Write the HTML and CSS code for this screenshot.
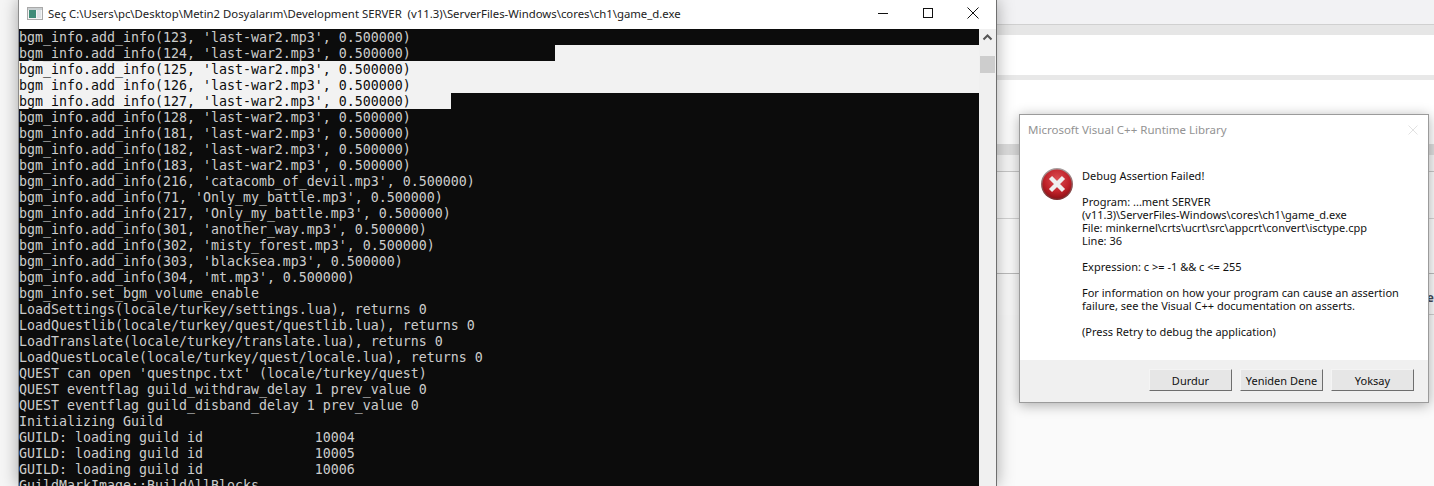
FILE: index.html
```html
<!DOCTYPE html>
<html lang="tr">
<head>
<meta charset="utf-8">
<title>game_d.exe</title>
<link rel="stylesheet" href="styles.css">
</head>
<body>
<div class="desktop">
  <div class="gutter"></div>
  <section class="console">
    <header class="titlebar">
      <svg class="app-icon" width="16" height="13" viewBox="0 0 16 13"><rect x="0.5" y="0.5" width="15" height="12" fill="#f4f4f4" stroke="#a9a9a9"/><rect x="1" y="1" width="14" height="2" fill="#c9ced0"/><rect x="2" y="3" width="7" height="8" fill="#3f8c78"/><rect x="10" y="3" width="4" height="8" fill="#dfe3e6"/></svg>
      <span class="title">Seç C:\Users\pc\Desktop\Metin2 Dosyalarım\Development SERVER  (v11.3)\ServerFiles-Windows\cores\ch1\game_d.exe</span>
      <div class="controls">
        <svg width="12" height="12" viewBox="0 0 12 12"><path d="M1 6.5H11" stroke="#111" fill="none"/></svg>
        <svg width="12" height="12" viewBox="0 0 12 12"><rect x="1.5" y="1.5" width="9" height="9" stroke="#111" fill="none"/></svg>
        <svg width="12" height="12" viewBox="0 0 12 12"><path d="M0.5 0.5L11.5 11.5M11.5 0.5L0.5 11.5" stroke="#111" fill="none"/></svg>
      </div>
    </header>
    <div class="console-body">
      <div class="screen">
        <div class="line">bgm_info.add_info(123, 'last-war2.mp3', 0.500000)</div>
        <div class="line split"><span class="seg seg-top">bgm_info.add_info(124, 'last-war2.mp3', 0.500000)</span><span class="tail tail-light"></span></div>
        <div class="line selected">bgm_info.add_info(125, 'last-war2.mp3', 0.500000)</div>
        <div class="line selected">bgm_info.add_info(126, 'last-war2.mp3', 0.500000)</div>
        <div class="line split"><span class="seg seg-bottom">bgm_info.add_info(127, 'last-war2.mp3', 0.500000)</span><span class="tail"></span></div>
        <div class="line">bgm_info.add_info(128, 'last-war2.mp3', 0.500000)</div>
        <div class="line">bgm_info.add_info(181, 'last-war2.mp3', 0.500000)</div>
        <div class="line">bgm_info.add_info(182, 'last-war2.mp3', 0.500000)</div>
        <div class="line">bgm_info.add_info(183, 'last-war2.mp3', 0.500000)</div>
        <div class="line">bgm_info.add_info(216, 'catacomb_of_devil.mp3', 0.500000)</div>
        <div class="line">bgm_info.add_info(71, 'Only_my_battle.mp3', 0.500000)</div>
        <div class="line">bgm_info.add_info(217, 'Only_my_battle.mp3', 0.500000)</div>
        <div class="line">bgm_info.add_info(301, 'another_way.mp3', 0.500000)</div>
        <div class="line">bgm_info.add_info(302, 'misty_forest.mp3', 0.500000)</div>
        <div class="line">bgm_info.add_info(303, 'blacksea.mp3', 0.500000)</div>
        <div class="line">bgm_info.add_info(304, 'mt.mp3', 0.500000)</div>
        <div class="line">bgm_info.set_bgm_volume_enable</div>
        <div class="line">LoadSettings(locale/turkey/settings.lua), returns 0</div>
        <div class="line">LoadQuestlib(locale/turkey/quest/questlib.lua), returns 0</div>
        <div class="line">LoadTranslate(locale/turkey/translate.lua), returns 0</div>
        <div class="line">LoadQuestLocale(locale/turkey/quest/locale.lua), returns 0</div>
        <div class="line">QUEST can open 'questnpc.txt' (locale/turkey/quest)</div>
        <div class="line">QUEST eventflag guild_withdraw_delay 1 prev_value 0</div>
        <div class="line">QUEST eventflag guild_disband_delay 1 prev_value 0</div>
        <div class="line">Initializing Guild</div>
        <div class="line">GUILD: loading guild id              10004</div>
        <div class="line">GUILD: loading guild id              10005</div>
        <div class="line">GUILD: loading guild id              10006</div>
        <div class="line">GuildMarkImage::BuildAllBlocks</div>
      </div>
      <div class="scrollbar">
        <svg class="arrow" width="15" height="17" viewBox="0 0 15 17"><path d="M3.5 10.5L7.5 6.5L11.5 10.5" stroke="#555" stroke-width="2" fill="none"/></svg>
        <div class="thumb"></div>
      </div>
    </div>
  </section>
  <main class="backdrop">
    <div class="band band-head"></div>
    <div class="band band-stripe-a"></div>
    <div class="band band-white-a"></div>
    <div class="band band-stripe-b"></div>
    <div class="band band-white-b"></div>
    <div class="band band-stripe-c"></div>
    <div class="band band-row-a"></div>
    <div class="band band-row-b"></div>
    <div class="band band-row-c"></div>
    <div class="band band-row-d"><span class="cell">ıe</span></div>
    <div class="dialog">
      <div class="dialog-title">
        <span>Microsoft Visual C++ Runtime Library</span>
        <svg width="10" height="10" viewBox="0 0 10 10"><path d="M0.5 0.5L9.5 9.5M9.5 0.5L0.5 9.5" stroke="#e2e2e2" fill="none"/></svg>
      </div>
      <div class="dialog-body">
        <svg class="error-icon" width="32" height="32" viewBox="0 0 32 32">
          <defs>
            <radialGradient id="red" cx="50%" cy="35%" r="70%"><stop offset="0" stop-color="#dc4f54"/><stop offset="0.6" stop-color="#c0222a"/><stop offset="1" stop-color="#860d12"/></radialGradient>
            <linearGradient id="ring" x1="0" y1="0" x2="0" y2="1"><stop offset="0" stop-color="#a8a0a0"/><stop offset="1" stop-color="#7a2a2c"/></linearGradient>
          </defs>
          <circle cx="16" cy="16" r="16" fill="url(#ring)"/>
          <circle cx="16" cy="16" r="14.6" fill="url(#red)"/>
          <path d="M9.5 9.5L22.5 22.5M22.5 9.5L9.5 22.5" stroke="#efefef" stroke-width="4.4" fill="none"/>
        </svg>
        <div class="message">
          <p>Debug Assertion Failed!</p>
          <p>Program: ...ment SERVER<br>(v11.3)\ServerFiles-Windows\cores\ch1\game_d.exe<br>File: minkernel\crts\ucrt\src\appcrt\convert\isctype.cpp<br>Line: 36</p>
          <p>Expression: c &gt;= -1 &amp;&amp; c &lt;= 255</p>
          <p>For information on how your program can cause an assertion<br>failure, see the Visual C++ documentation on asserts.</p>
          <p>(Press Retry to debug the application)</p>
        </div>
      </div>
      <div class="dialog-footer">
        <button class="btn">Durdur</button>
        <button class="btn">Yeniden Dene</button>
        <button class="btn">Yoksay</button>
      </div>
    </div>
  </main>
</div>
</body>
</html>
```

FILE: styles.css
```css
* { box-sizing: border-box; }
html, body { margin: 0; padding: 0; }
body { width: 1434px; height: 486px; overflow: hidden; background: #fafafa; }

.desktop { display: flex; width: 1434px; height: 486px; overflow: hidden; }

.gutter { width: 18px; flex: none; background: #f6f6f6; }

.console {
  position: relative;
  z-index: 2;
  width: 979px;
  flex: none;
  height: 486px;
  display: flex;
  flex-direction: column;
  background: #fff;
  border-left: 1px solid #8c8c8c;
  border-right: 1px solid #6f6f6f;
  box-shadow: 0 0 16px rgba(0, 0, 0, 0.34);
}

.titlebar {
  height: 29px;
  flex: none;
  display: flex;
  align-items: center;
  padding-left: 8px;
  background: #fff;
}
.app-icon { flex: none; margin-right: 5px; margin-top: -3px; }
.title {
  font: 11.35px "Noto Sans", sans-serif;
  color: #222;
  white-space: pre;
  margin-top: -2px;
}
.controls {
  margin-left: auto;
  display: flex;
  gap: 33px;
  padding-right: 17px;
  margin-top: -3px;
}

.console-body { flex: 1; display: flex; min-height: 0; }
.screen {
  width: 960px;
  flex: none;
  background: #0c0c0c;
  overflow: hidden;
}
.line {
  height: 16px;
  padding-top: 1px;
  font: 13.29px/16px "DejaVu Sans Mono", monospace;
  color: #cccccc;
  white-space: pre;
  display: flex;
}
.line.selected { background: #f2f2f2; color: #0c0c0c; }
.line.split { padding-top: 0; }
.seg { display: block; flex: none; height: 16px; padding-top: 1px; }
.seg-top { width: 536px; }
.seg-bottom { width: 432px; background: #f2f2f2; color: #0c0c0c; }
.tail { flex: 1; }
.tail-light { background: #f2f2f2; }

.scrollbar { flex: 1; background: #f0f0f0; padding-left: 1px; }
.arrow { display: block; }
.thumb { width: 15px; height: 17px; margin-top: 10px; background: #cdcdcd; }

.backdrop { position: relative; flex: 1; height: 486px; display: flex; flex-direction: column; background: #fafafa; }
.band { flex: none; }
.band-head { height: 25px; background: #f2f2f4; border-bottom: 1px solid #d0d0d0; }
.band-stripe-a { height: 10px; background: #e6e6e6; }
.band-white-a { height: 40px; background: #fff; }
.band-stripe-b { height: 5px; background: #e8e8e8; }
.band-white-b { height: 64px; background: #fff; }
.band-stripe-c { height: 11px; background: #dedede; }
.band-row-a { height: 17px; background: #f7f7f7; border-bottom: 1px solid #c8c8c8; }
.band-row-b { height: 47px; background: #fbfbfb; border-bottom: 1px solid #d4d4d4; }
.band-row-c { height: 55px; background: #fdfdfd; border-bottom: 1px solid #bdbdbd; }
.band-row-d { height: 41px; background: #fbfbfb; display: flex; justify-content: flex-end; align-items: center; }
.cell {
  width: 300px;
  height: 41px;
  display: block;
  border-bottom: 1px solid #cfcfcf;
  text-align: right;
  font: bold 12px/48px "Noto Sans", sans-serif;
  color: #444b5a;
  white-space: nowrap;
  overflow: hidden;
  direction: rtl;
}

.dialog {
  position: absolute;
  left: 22px;
  top: 114px;
  width: 410px;
  height: 289px;
  display: flex;
  flex-direction: column;
  background: #fff;
  border: 1px solid #9b9b9b;
  box-shadow: 0 2px 12px rgba(0, 0, 0, 0.32);
}
.dialog-title {
  height: 29px;
  flex: none;
  display: flex;
  align-items: center;
  justify-content: space-between;
  padding: 0 10px 0 8px;
  font: 11.5px "Noto Sans", sans-serif;
  color: #939393;
}
.dialog-body { flex: 1; display: flex; padding: 24px 20px 0 21px; gap: 9px; min-height: 0; }
.error-icon { flex: none; }
.message {
  font: 11px/13px "Noto Sans", sans-serif;
  color: #111;
  margin-top: 1px;
  white-space: nowrap;
}
.message p { margin: 0 0 13px; }

.dialog-footer {
  height: 42px;
  flex: none;
  display: flex;
  justify-content: flex-end;
  align-items: flex-start;
  gap: 8px;
  padding: 9px 14px 0 0;
  background: #f0f0f0;
}
.btn {
  width: 83px;
  height: 22px;
  padding: 0;
  background: #e6e6e6;
  border: 1px solid;
  border-color: #f4f4f4 #6e6e6e #6e6e6e #f4f4f4;
  font: 11px "Noto Sans", sans-serif;
  color: #111;
}
```
